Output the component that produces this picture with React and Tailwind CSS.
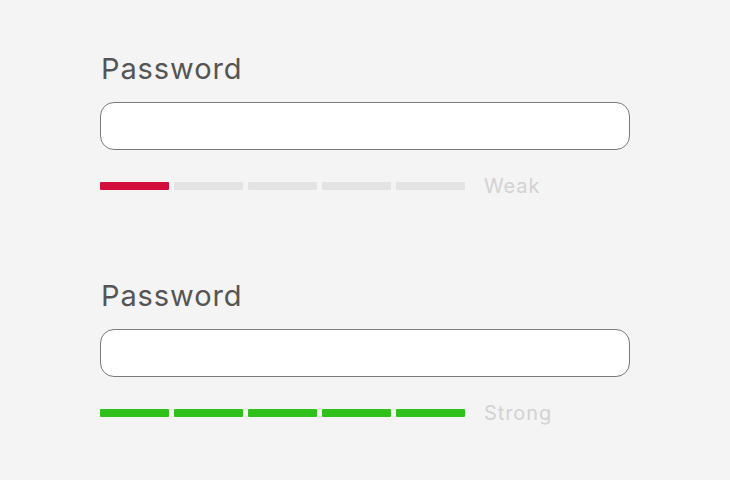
import React from 'react'

const levels = {
  weak: { filled: 1, color: 'bg-[#d20f3c]', label: 'Weak' },
  strong: { filled: 5, color: 'bg-[#2fc01c]', label: 'Strong' },
}

const PasswordField = ({ strength }) => {
  const level = levels[strength]
  return (
    <div className="flex flex-col">
      <label className="text-[29px] leading-[29px] text-[#555555] pl-[1px] tracking-[0.9px]">Password</label>
      <input
        type="password"
        className="mt-[19px] h-[48px] w-[530px] rounded-[14px] border border-[#7a7a7a] bg-white outline-none"
      />
      <div className="mt-[27px] flex items-center">
        <div className="flex gap-[5px]">
          {[0, 1, 2, 3, 4].map((i) => (
            <div
              key={i}
              className={`h-[8px] w-[69px] rounded-[1px] ${i < level.filled ? level.color : 'bg-[#e3e3e3]'}`}
            />
          ))}
        </div>
        <span className="ml-[19px] text-[20px] leading-[18px] text-[#d2d2d2] tracking-[0.9px]">{level.label}</span>
      </div>
    </div>
  )
}

const App = () => {
  return (
    <div
      className="w-[730px] h-[480px] bg-[#f4f4f4] pl-[100px] pt-[54px] flex flex-col gap-[86px]"
      style={{ fontFamily: 'Inter, "Noto Sans", sans-serif' }}
    >
      <PasswordField strength="weak" />
      <PasswordField strength="strong" />
    </div>
  )
}

export default App
